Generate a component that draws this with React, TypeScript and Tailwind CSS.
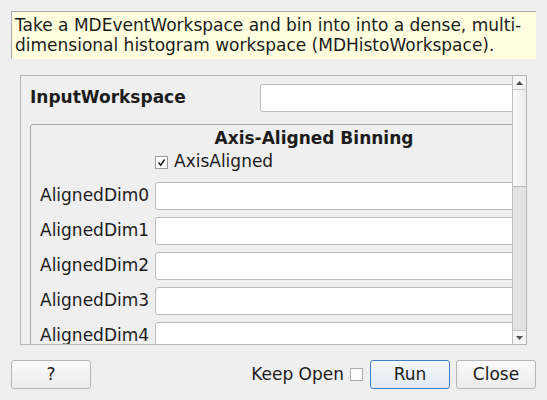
import React from "react";

const dims = ["AlignedDim0", "AlignedDim1", "AlignedDim2", "AlignedDim3", "AlignedDim4"];

function TextBox({ className = "" }: { className?: string }) {
  return <div className={`h-[28px] rounded-[3px] border border-[#bababa] bg-white ${className}`} />;
}

function ScrollBar() {
  return (
    <div className="flex w-[14px] flex-col border-l border-[#bdbdbd] bg-[#e3e3e3]">
      <div className="flex h-[14px] items-center justify-center border-b border-[#c8c8c8] bg-[#f4f4f4]">
        <svg width="7" height="4" viewBox="0 0 7 4">
          <path d="M0 4 L3.5 0 L7 4 Z" fill="#555" />
        </svg>
      </div>
      <div className="h-[97px] border-b border-[#b8b8b8] bg-gradient-to-r from-[#fbfbfb] to-[#ececec]" />
      <div className="flex-1" />
      <div className="flex h-[14px] items-center justify-center border-t border-[#c8c8c8] bg-[#f4f4f4]">
        <svg width="7" height="4" viewBox="0 0 7 4">
          <path d="M0 0 L3.5 4 L7 0 Z" fill="#555" />
        </svg>
      </div>
    </div>
  );
}

export default function App() {
  return (
    <div
      className="flex h-[400px] w-[547px] flex-col bg-[#efefef] text-[17px] text-[#1c1c1c]"
      style={{ fontFamily: '"DejaVu Sans", sans-serif' }}
    >
      <div className="mx-[11px] mt-[11px] h-[48px] border-l border-t border-[#a8a8a8] bg-[#ffffdf] pl-[3px] pt-[3px] leading-[20px]">
        Take a MDEventWorkspace and bin into into a dense, multi-
        <br />
        dimensional histogram workspace (MDHistoWorkspace).
      </div>

      <div className="ml-[20px] mr-[20px] mt-[16px] flex h-[270px] border border-[#b4b4b4]">
        <div className="flex-1 overflow-hidden">
          <div className="w-[586px] px-[9px] pt-[8px]">
            <div className="flex h-[28px] items-center">
              <div className="w-[230px] font-bold">InputWorkspace</div>
              <TextBox className="flex-1" />
            </div>
            <div className="mt-[12px] rounded-[3px] border border-[#a9a9a9] px-[9px] pb-[10px]">
              <div className="pt-[3px] text-center font-bold leading-[20px]">Axis-Aligned Binning</div>
              <div className="flex h-[28px] items-center pl-[115px]">
                <div className="flex h-[13px] w-[13px] items-center justify-center border border-[#9a9a9a] bg-white">
                  <svg width="9" height="9" viewBox="0 0 9 9">
                    <path d="M1.5 4.5 L3.7 7.2 L7.6 1.5" fill="none" stroke="#1c1c1c" strokeWidth="1.5" />
                  </svg>
                </div>
                <span className="ml-[6px]">AxisAligned</span>
              </div>
              <div className="mt-[6px] flex flex-col gap-[7px]">
                {dims.map((d) => (
                  <div key={d} className="flex items-center">
                    <div className="w-[115px]">{d}</div>
                    <TextBox className="flex-1" />
                  </div>
                ))}
              </div>
            </div>
          </div>
        </div>
        <ScrollBar />
      </div>

      <div className="mx-[11px] mt-[15px] flex items-center">
        <button className="h-[29px] w-[80px] rounded-[3px] border border-[#b5b5b5] bg-gradient-to-b from-[#fafafa] to-[#ececec]">
          ?
        </button>
        <div className="flex-1" />
        <span>Keep Open</span>
        <div className="ml-[6px] h-[13px] w-[13px] border border-[#ababab] bg-white" />
        <button className="ml-[7px] h-[29px] w-[80px] rounded-[3px] border border-[#3d7fc4] bg-gradient-to-b from-[#f5f8fb] to-[#e0e8f1]">
          Run
        </button>
        <button className="ml-[6px] h-[29px] w-[80px] rounded-[3px] border border-[#b5b5b5] bg-gradient-to-b from-[#fafafa] to-[#ececec]">
          Close
        </button>
      </div>
    </div>
  );
}
